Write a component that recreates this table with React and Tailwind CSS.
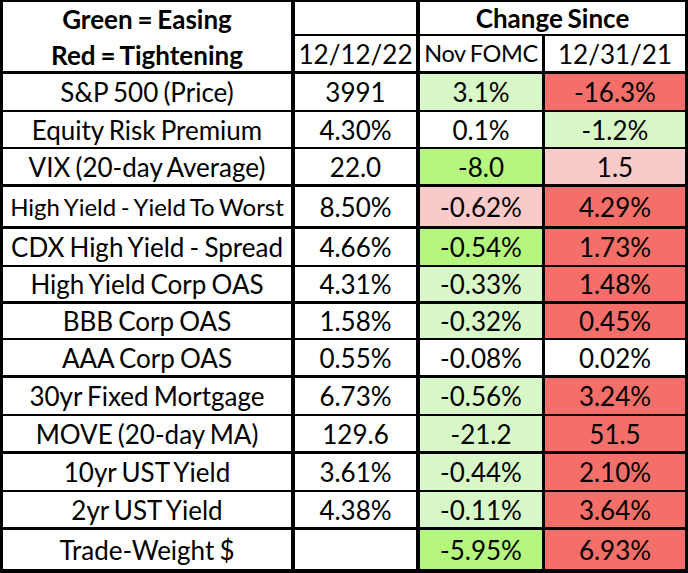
const LG = 'bg-[#d9f8c8]'
const BG = 'bg-[#b4f67e]'
const PK = 'bg-[#f9caca]'
const RD = 'bg-[#f46f69]'

const rows = [
  { name: 'S&P 500 (Price)', val: '3991', a: ['3.1%', LG], b: ['-16.3%', RD], h: 'h-[38px]', line: 'border-b-2' },
  { name: 'Equity Risk Premium', val: '4.30%', a: ['0.1%', ''], b: ['-1.2%', LG], h: 'h-[37px]', line: 'border-b-2' },
  { name: 'VIX (20-day Average)', val: '22.0', a: ['-8.0', BG], b: ['1.5', PK], h: 'h-[38px]', line: 'border-b-[3px]' },
  { name: 'High Yield - Yield To Worst', val: '8.50%', a: ['-0.62%', PK], b: ['4.29%', RD], h: 'h-[42px]', line: 'border-b-[3px]', small: true },
  { name: 'CDX High Yield - Spread', val: '4.66%', a: ['-0.54%', BG], b: ['1.73%', RD], h: 'h-[38px]', line: 'border-b-2' },
  { name: 'High Yield Corp OAS', val: '4.31%', a: ['-0.33%', LG], b: ['1.48%', RD], h: 'h-[37px]', line: 'border-b-[3px]' },
  { name: 'BBB Corp OAS', val: '1.58%', a: ['-0.32%', LG], b: ['0.45%', RD], h: 'h-[36px]', line: 'border-b-2' },
  { name: 'AAA Corp OAS', val: '0.55%', a: ['-0.08%', ''], b: ['0.02%', ''], h: 'h-[38px]', line: 'border-b-[3px]' },
  { name: '30yr Fixed Mortgage', val: '6.73%', a: ['-0.56%', LG], b: ['3.24%', RD], h: 'h-[38px]', line: 'border-b-2' },
  { name: 'MOVE (20-day MA)', val: '129.6', a: ['-21.2', LG], b: ['51.5', RD], h: 'h-[38px]', line: 'border-b-[3px]' },
  { name: '10yr UST Yield', val: '3.61%', a: ['-0.44%', LG], b: ['2.10%', RD], h: 'h-[38px]', line: 'border-b-2' },
  { name: '2yr UST Yield', val: '4.38%', a: ['-0.11%', LG], b: ['3.64%', RD], h: 'h-[38px]', line: 'border-b-[3px]' },
  { name: 'Trade-Weight $', val: '', a: ['-5.95%', BG], b: ['6.93%', RD], h: 'flex-1', line: '' },
]

function Row({ r }) {
  return (
    <div className={`grid grid-cols-[292px_125px_125px_1fr] border-black ${r.h} ${r.line}`}>
      <div className={`flex items-center justify-center whitespace-nowrap border-r-4 border-black [word-spacing:-1.5px] ${r.small ? 'text-[24px]' : ''}`}>
        {r.name}
      </div>
      <div className="flex items-center justify-center border-r-4 border-black">{r.val}</div>
      <div className={`flex items-center justify-center border-r-[3px] border-black ${r.a[1]}`}>{r.a[0]}</div>
      <div className={`flex items-center justify-center ${r.b[1]}`}>{r.b[0]}</div>
    </div>
  )
}

export default function App() {
  return (
    <div
      className="flex h-[573px] w-[688px] flex-col border-x-[3px] border-t-2 border-b-4 border-black bg-white text-[26px] leading-none text-black"
      style={{ fontFamily: 'Lato, "Open Sans", sans-serif' }}
    >
      <div className="flex h-[72px] border-b-[3px] border-black">
        <div className="flex w-[292px] flex-col items-center justify-center gap-[10px] border-r-4 border-black font-bold [word-spacing:-1.5px]">
          <div>Green = Easing</div>
          <div>Red = Tightening</div>
        </div>
        <div className="flex flex-1 flex-col">
          <div className="flex h-[34px] border-b-2 border-black">
            <div className="w-[125px] border-r-4 border-black" />
            <div className="flex flex-1 items-center justify-center font-bold [word-spacing:-1.5px]">Change Since</div>
          </div>
          <div className="grid flex-1 grid-cols-[125px_125px_1fr]">
            <div className="flex items-center justify-center border-r-4 border-black">12/12/22</div>
            <div className="flex items-center justify-center whitespace-nowrap border-r-[3px] border-black text-[23.5px] tracking-[-0.4px] [word-spacing:-1px]">Nov FOMC</div>
            <div className="flex items-center justify-center">12/31/21</div>
          </div>
        </div>
      </div>
      {rows.map((r) => (
        <Row key={r.name} r={r} />
      ))}
    </div>
  )
}
